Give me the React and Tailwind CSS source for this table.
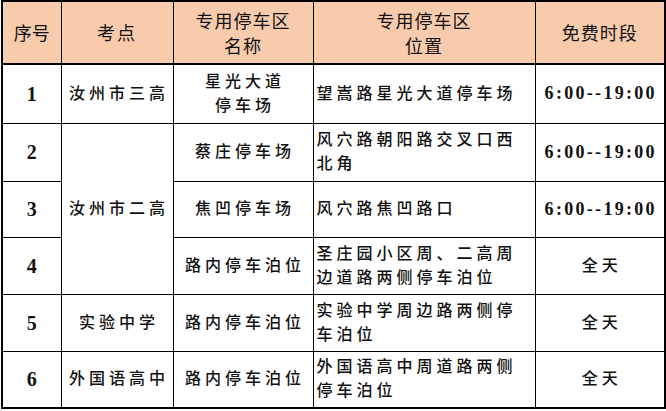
import React from 'react';

const serif = { fontFamily: '"Liberation Serif", "Noto Sans CJK SC", serif' };

const rows = [
  { no: '1', site: '汝州市三高', name: ['星光大道', '停车场'], place: ['望嵩路星光大道停车场'], time: '6:00--19:00', h: 'h-[59px]' },
  { no: '2', site: '汝州市二高', span: 3, name: ['蔡庄停车场'], place: ['风穴路朝阳路交叉口西', '北角'], time: '6:00--19:00', h: 'h-[58px]' },
  { no: '3', name: ['焦凹停车场'], place: ['风穴路焦凹路口'], time: '6:00--19:00', h: 'h-[56px]' },
  { no: '4', name: ['路内停车泊位'], place: ['圣庄园小区周、二高周', '边道路两侧停车泊位'], time: '全天', h: 'h-[57px]' },
  { no: '5', site: '实验中学', name: ['路内停车泊位'], place: ['实验中学周边路两侧停', '车泊位'], time: '全天', h: 'h-[57px]' },
  { no: '6', site: '外国语高中', name: ['路内停车泊位'], place: ['外国语高中周道路两侧', '停车泊位'], time: '全天', h: 'h-[57px]' },
];

export default function App() {
  return (
    <div className="w-[666px] h-[411px] bg-white pl-px text-[#111]">
      <table className="w-[663px] table-fixed border-collapse border-2 border-black">
        <colgroup>
          <col className="w-[59px]" />
          <col className="w-[112px]" />
          <col className="w-[140px]" />
          <col className="w-[222px]" />
          <col className="w-[130px]" />
        </colgroup>
        <thead>
          <tr className="h-[63px] bg-[#f8cbad] border-b-2 border-black text-[18px] leading-[25px]" style={{ fontFamily: '"Noto Sans CJK SC", sans-serif' }}>
            <th className="border border-black font-normal">序号</th>
            <th className="border border-black font-normal tracking-[2px]">考点</th>
            <th className="border border-black font-normal tracking-[1px]">专用停车区<br />名称</th>
            <th className="border border-black font-normal tracking-[1px]">专用停车区<br />位置</th>
            <th className="border border-black font-normal tracking-[1px]">免费时段</th>
          </tr>
        </thead>
        <tbody style={serif}>
          {rows.map((r) => (
            <tr key={r.no} className={r.h}>
              <td className="border border-black text-center text-[20px] font-bold">{r.no}</td>
              {r.site && (
                <td rowSpan={r.span || 1} className="border border-black text-center text-[16px] font-medium tracking-[4px] pl-[4px]">
                  {r.site}
                </td>
              )}
              <td className="border border-black text-center text-[16px] font-medium tracking-[4px] pl-[4px] leading-[24px]">
                {r.name.map((l) => (
                  <div key={l}>{l}</div>
                ))}
              </td>
              <td className="border border-black px-[3px] text-[16px] font-medium tracking-[4px] leading-[24px] whitespace-nowrap">
                {r.place.map((l) => (
                  <div key={l}>{l}</div>
                ))}
              </td>
              <td className={r.time === '全天' ? 'border border-black text-center text-[16px] font-medium tracking-[4px] pl-[4px]' : 'border border-black text-center text-[18px] font-bold tracking-[2.3px] pl-[2px]'}>
                {r.time}
              </td>
            </tr>
          ))}
        </tbody>
      </table>
    </div>
  );
}
